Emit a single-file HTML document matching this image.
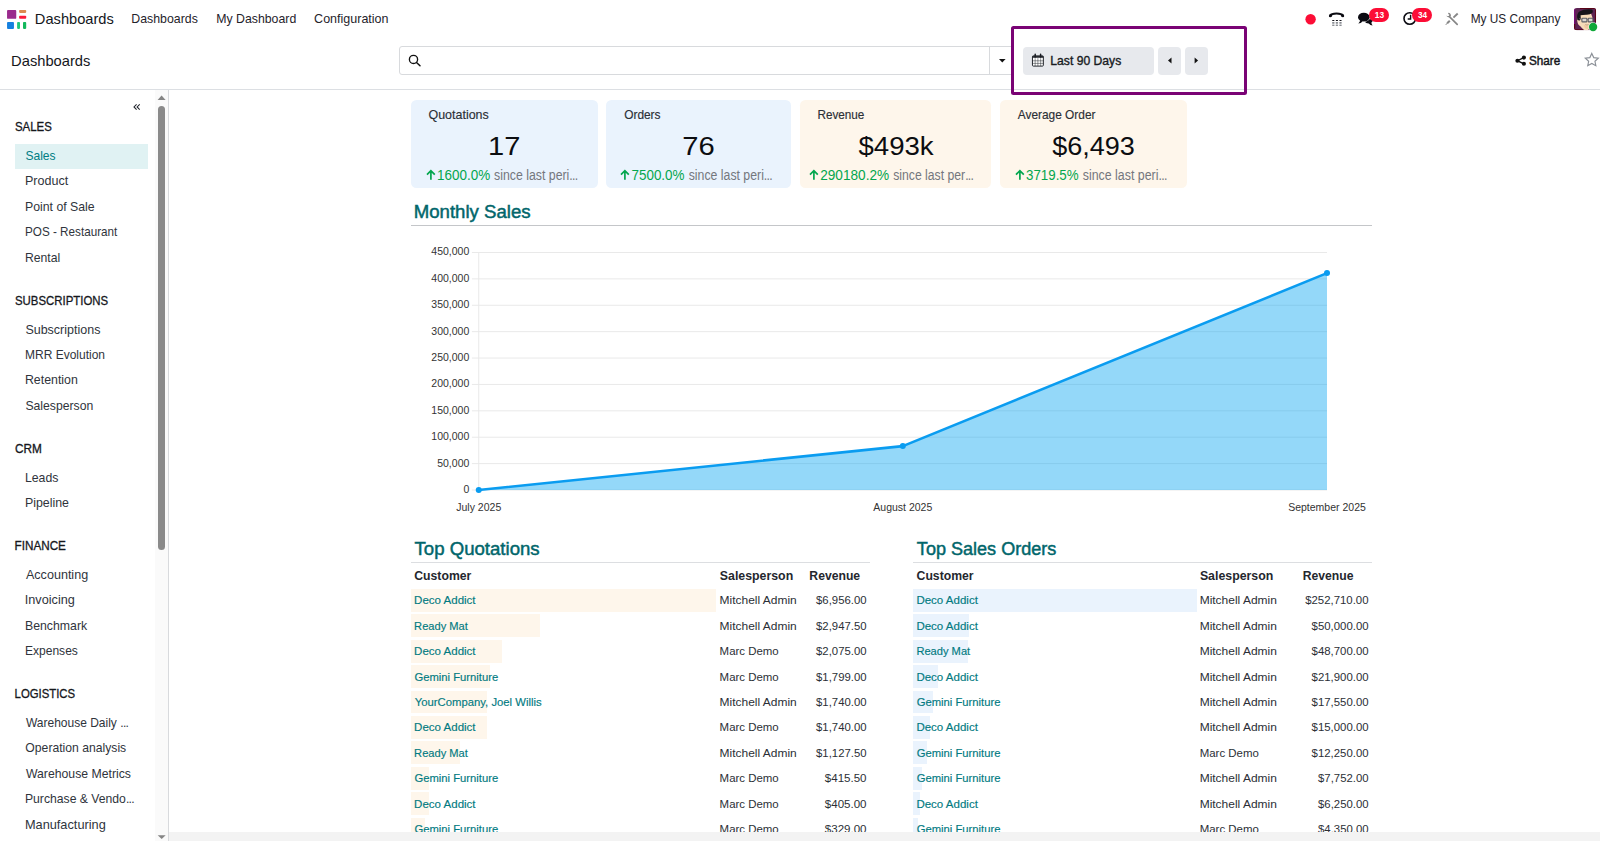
<!DOCTYPE html>
<html lang="en"><head><meta charset="utf-8"><title>Dashboards</title>
<style>
html,body{margin:0;padding:0;background:#fff;}
body{width:1600px;height:841px;overflow:hidden;position:relative;font-family:"Liberation Sans",sans-serif;}
#r{position:absolute;left:0;top:0;width:1600px;height:841px;overflow:hidden;}
#r div,#r svg{position:absolute;}
#r span{position:absolute;white-space:nowrap;line-height:1;transform-origin:0 0;}
</style></head><body><div id="r">
<svg style="left:0;top:0" width="40" height="40" viewBox="0 0 40 40"><rect x="7.05" y="10" width="9.2" height="8.8" rx="0.9" fill="#9a2a8d"/><rect x="19.1" y="10" width="7.1" height="2.9" rx="0.8" fill="#dd8a50"/><rect x="19.1" y="15.8" width="7.1" height="2.9" rx="0.8" fill="#fb1a3c"/><rect x="7.05" y="22.1" width="6.9" height="6.8" rx="0.9" fill="#1680df"/><rect x="17.1" y="22.1" width="2.9" height="6.8" rx="0.8" fill="#22c77c"/><rect x="23" y="22.1" width="3.2" height="6.8" rx="0.8" fill="#12b85c"/></svg>
<div style="left:0px;top:89px;width:1600px;height:1px;background:#dcdfe3;"></div>
<div style="left:399px;top:46px;width:613px;height:27px;border:1px solid #d8dadd;border-radius:3px;background:#fff"></div>
<div style="left:989px;top:47px;width:1px;height:27px;background:#d8dadd;"></div>
<svg style="left:405px;top:51px" width="20" height="20" viewBox="0 0 20 20"><circle cx="8.5" cy="8.4" r="4.1" fill="none" stroke="#111" stroke-width="1.35"/><path d="M11.5 11.5 L15 14.8" stroke="#111" stroke-width="1.5" stroke-linecap="round"/></svg>
<svg style="left:998px;top:57px" width="10" height="8" viewBox="0 0 10 8"><path d="M1 1.9 H7.6 L4.3 5.4 Z" fill="#111"/></svg>
<div style="left:1011.3px;top:26.3px;width:229.6px;height:63.1px;border:3px solid #7a0375;border-radius:2.5px;"></div>
<div style="left:1023px;top:46.5px;width:131px;height:28.4px;background:#e7e9ed;border-radius:4px"></div>
<div style="left:1157.7px;top:46.5px;width:23.3px;height:28.4px;background:#e7e9ed;border-radius:4px"></div>
<div style="left:1184.9px;top:46.5px;width:23.2px;height:28.4px;background:#e7e9ed;border-radius:4px"></div>
<svg style="left:1165px;top:55px" width="10" height="12" viewBox="0 0 10 12"><path d="M6.5 2.4 V8.5 L3.0 5.45 Z" fill="#111"/></svg>
<svg style="left:1191px;top:55px" width="10" height="12" viewBox="0 0 10 12"><path d="M3.6 2.4 V8.5 L7.1 5.45 Z" fill="#111"/></svg>
<div style="left:168px;top:90px;width:1px;height:751px;background:#d8dadd;"></div>
<div style="left:155px;top:90px;width:13px;height:751px;background:#fafafa;"></div>
<div style="left:158px;top:106px;width:7.4px;height:443.5px;background:#8a8a8a;border-radius:3.7px"></div>
<svg style="left:155px;top:92px" width="13" height="10" viewBox="0 0 13 10"><path d="M2.6 8 L6.6 3.6 L10.6 8 Z" fill="#858585"/></svg>
<svg style="left:155px;top:832px" width="13" height="9" viewBox="0 0 13 9"><path d="M2.7 3.2 H10.7 L6.7 7 Z" fill="#858585"/></svg>
<div style="left:15px;top:143.8px;width:133px;height:25.1px;background:#e0f2f3;"></div>
<div style="left:411px;top:100px;width:186.9px;height:88.1px;background:#eaf3fd;border-radius:5.5px"></div>
<svg style="left:425.8px;top:168.5px" width="11" height="12" viewBox="0 0 11 12"><path d="M4.9 10.7 V2.2 M1 5.6 L4.9 1.6 L8.8 5.6" fill="none" stroke="#04a64e" stroke-width="1.7" stroke-linecap="butt" stroke-linejoin="miter"/></svg>
<div style="left:606.25px;top:100px;width:185px;height:88.1px;background:#eaf3fd;border-radius:5.5px"></div>
<svg style="left:620.4px;top:168.5px" width="11" height="12" viewBox="0 0 11 12"><path d="M4.9 10.7 V2.2 M1 5.6 L4.9 1.6 L8.8 5.6" fill="none" stroke="#04a64e" stroke-width="1.7" stroke-linecap="butt" stroke-linejoin="miter"/></svg>
<div style="left:800px;top:100px;width:191px;height:88.1px;background:#fef6eb;border-radius:5.5px"></div>
<svg style="left:808.8px;top:168.5px" width="11" height="12" viewBox="0 0 11 12"><path d="M4.9 10.7 V2.2 M1 5.6 L4.9 1.6 L8.8 5.6" fill="none" stroke="#04a64e" stroke-width="1.7" stroke-linecap="butt" stroke-linejoin="miter"/></svg>
<div style="left:1000px;top:100px;width:186.6px;height:88.1px;background:#fef6eb;border-radius:5.5px"></div>
<svg style="left:1014.8px;top:168.5px" width="11" height="12" viewBox="0 0 11 12"><path d="M4.9 10.7 V2.2 M1 5.6 L4.9 1.6 L8.8 5.6" fill="none" stroke="#04a64e" stroke-width="1.7" stroke-linecap="butt" stroke-linejoin="miter"/></svg>
<div style="left:411px;top:225px;width:961px;height:1px;background:#c4c6c9;"></div>
<svg style="left:400px;top:235px" width="1000" height="290" viewBox="400 235 1000 290"><path d="M471.9 490.00 H1327.00" stroke="#e9e9e9" stroke-width="1"/><path d="M471.9 463.61 H1327.00" stroke="#e9e9e9" stroke-width="1"/><path d="M471.9 437.22 H1327.00" stroke="#e9e9e9" stroke-width="1"/><path d="M471.9 410.83 H1327.00" stroke="#e9e9e9" stroke-width="1"/><path d="M471.9 384.44 H1327.00" stroke="#e9e9e9" stroke-width="1"/><path d="M471.9 358.06 H1327.00" stroke="#e9e9e9" stroke-width="1"/><path d="M471.9 331.67 H1327.00" stroke="#e9e9e9" stroke-width="1"/><path d="M471.9 305.28 H1327.00" stroke="#e9e9e9" stroke-width="1"/><path d="M471.9 278.89 H1327.00" stroke="#e9e9e9" stroke-width="1"/><path d="M471.9 252.50 H1327.00" stroke="#e9e9e9" stroke-width="1"/><path d="M478.75 252.50 V490.00" stroke="#e9e9e9" stroke-width="1"/><path d="M478.75 490.00 L902.80 446.10 L1327.00 273.10 L1327.00 490.00 Z" fill="#00a2f1" fill-opacity="0.42"/><path d="M478.75 490.00 L902.80 446.10 L1327.00 273.10" fill="none" stroke="#0a9cf0" stroke-width="2.6" stroke-linejoin="round" stroke-linecap="round"/><circle cx="478.75" cy="490.00" r="3" fill="#0a9cf0"/><circle cx="902.80" cy="446.10" r="3" fill="#0a9cf0"/><circle cx="1327.00" cy="273.10" r="3" fill="#0a9cf0"/></svg>
<div style="left:411px;top:561.8px;width:459px;height:1.4px;background:#dcdee1;"></div>
<div style="left:411px;top:588.8px;width:305.2px;height:22.9px;background:#fef6eb;"></div>
<div style="left:411px;top:614.23px;width:129.324px;height:22.9px;background:#fef6eb;"></div>
<div style="left:411px;top:639.66px;width:91.0423px;height:22.9px;background:#fef6eb;"></div>
<div style="left:411px;top:665.09px;width:78.9325px;height:22.9px;background:#fef6eb;"></div>
<div style="left:411px;top:690.52px;width:76.3439px;height:22.9px;background:#fef6eb;"></div>
<div style="left:411px;top:715.95px;width:76.3439px;height:22.9px;background:#fef6eb;"></div>
<div style="left:411px;top:741.38px;width:49.47px;height:22.9px;background:#fef6eb;"></div>
<div style="left:411px;top:766.81px;width:18.2304px;height:22.9px;background:#fef6eb;"></div>
<div style="left:411px;top:792.24px;width:17.7697px;height:22.9px;background:#fef6eb;"></div>
<div style="left:411px;top:817.67px;width:14.4351px;height:22.9px;background:#fef6eb;"></div>
<div style="left:913.3px;top:561.8px;width:458.7px;height:1.4px;background:#dcdee1;"></div>
<div style="left:913.3px;top:588.8px;width:283.3px;height:22.9px;background:#eaf3fd;"></div>
<div style="left:913.3px;top:614.23px;width:56.0524px;height:22.9px;background:#eaf3fd;"></div>
<div style="left:913.3px;top:639.66px;width:54.595px;height:22.9px;background:#eaf3fd;"></div>
<div style="left:913.3px;top:665.09px;width:24.5509px;height:22.9px;background:#eaf3fd;"></div>
<div style="left:913.3px;top:690.52px;width:19.6744px;height:22.9px;background:#eaf3fd;"></div>
<div style="left:913.3px;top:715.95px;width:16.8157px;height:22.9px;background:#eaf3fd;"></div>
<div style="left:913.3px;top:741.38px;width:13.7328px;height:22.9px;background:#eaf3fd;"></div>
<div style="left:913.3px;top:766.81px;width:8.69036px;height:22.9px;background:#eaf3fd;"></div>
<div style="left:913.3px;top:792.24px;width:7.00655px;height:22.9px;background:#eaf3fd;"></div>
<div style="left:913.3px;top:817.67px;width:4.87656px;height:22.9px;background:#eaf3fd;"></div>
<svg style="left:1300px;top:8px" width="22" height="22" viewBox="1300 8 22 22"><circle cx="1310.6" cy="19.2" r="5.2" fill="#fc0d36"/></svg>
<svg style="left:1324px;top:8px" width="26" height="22" viewBox="1324 8 26 22"><path d="M1330.2 15.9 C1331.6 12.6 1341.4 12.6 1342.9 15.9" fill="none" stroke="#0b0b12" stroke-width="1.9" stroke-linecap="round"/><path d="M1328.9 15.9 q0.2 -1.9 2.3 -2.3 l1.1 2.2 q-0.3 1.3 -1.9 1.5 q-1.5 0 -1.5 -1.4 Z" fill="#0b0b12"/><path d="M1344.2 15.9 q-0.2 -1.9 -2.3 -2.3 l-1.1 2.2 q0.3 1.3 1.9 1.5 q1.5 0 1.5 -1.4 Z" fill="#0b0b12"/><rect x="1332.10" y="22.1" width="2.4" height="3.9" fill="#dfe0e3"/><rect x="1332.15" y="19.90" width="2.3" height="1.10" rx="0.4" fill="#15151c"/><rect x="1332.15" y="22.15" width="2.3" height="1.30" rx="0.4" fill="#6f7278"/><rect x="1332.15" y="24.80" width="2.3" height="1.20" rx="0.4" fill="#8d9095"/><rect x="1335.70" y="22.1" width="2.4" height="3.9" fill="#dfe0e3"/><rect x="1335.75" y="19.90" width="2.3" height="1.10" rx="0.4" fill="#15151c"/><rect x="1335.75" y="22.15" width="2.3" height="1.30" rx="0.4" fill="#6f7278"/><rect x="1335.75" y="24.80" width="2.3" height="1.20" rx="0.4" fill="#8d9095"/><rect x="1339.30" y="22.1" width="2.4" height="3.9" fill="#dfe0e3"/><rect x="1339.35" y="19.90" width="2.3" height="1.10" rx="0.4" fill="#15151c"/><rect x="1339.35" y="22.15" width="2.3" height="1.30" rx="0.4" fill="#6f7278"/><rect x="1339.35" y="24.80" width="2.3" height="1.20" rx="0.4" fill="#8d9095"/></svg>
<svg style="left:1354px;top:8px" width="24" height="22" viewBox="1354 8 24 22"><path d="M1364.6 21.4 q1.1 1.9 4.1 2.0 q1.6 1.7 3.9 2.2 q-1.2 -1.4 -1.2 -3.0 q1.3 -1.0 1.5 -2.6 l-3 -1 z" fill="#0b0b12"/><ellipse cx="1363.8" cy="17.2" rx="6.2" ry="4.7" fill="#fff"/><ellipse cx="1363.8" cy="17.2" rx="5.8" ry="4.4" fill="#0b0b12"/><path d="M1360.2 20.2 q-0.3 1.9 -1.9 3.2 q2.6 -0.2 4.3 -2.0 z" fill="#0b0b12"/></svg>
<div style="left:1369px;top:7.8px;width:19.9px;height:14px;border-radius:7px;background:#fc0d36"></div>
<svg style="left:1400px;top:8px" width="20" height="22" viewBox="1400 8 20 22"><circle cx="1409.75" cy="18.5" r="5.75" fill="#fff" stroke="#0b0b12" stroke-width="1.6"/><path d="M1410.6 14.7 V19.0 H1407.7" fill="none" stroke="#0b0b12" stroke-width="1.4"/></svg>
<div style="left:1412.3px;top:8px;width:19.7px;height:13.8px;border-radius:6.9px;background:#fc0d36"></div>
<svg style="left:1443px;top:10px" width="18" height="18" viewBox="1443 10 18 18"><path d="M1449.4 16.6 L1457.2 24.3" stroke="#878787" stroke-width="1.7" stroke-linecap="round"/><path d="M1446.3 15.5 q0.6 2.2 3.2 1.7 q1.4 -1.6 -0.2 -3.6 l-0.2 2.2 l-1.6 0.4 z" fill="#878787"/><path d="M1448.2 13.4 q2.4 0.2 2.2 3.0" fill="none" stroke="#878787" stroke-width="1.1"/><path d="M1453.4 17.6 L1457.7 13.5" stroke="#878787" stroke-width="1.9" stroke-linecap="butt"/><path d="M1449.8 20.8 L1447.2 23.2" stroke="#878787" stroke-width="2.1" stroke-linecap="butt"/><path d="M1447.4 23.0 L1446.0 24.6" stroke="#878787" stroke-width="1.0" stroke-linecap="round"/></svg>
<svg style="left:1574px;top:8px" width="26" height="26" viewBox="0 0 26 26"><defs><clipPath id="av"><rect x="0" y="0" width="22.1" height="22.2" rx="3"/></clipPath></defs><g clip-path="url(#av)"><rect x="0" y="0" width="22.1" height="22.2" fill="#5d2452"/><rect x="0" y="0" width="1.2" height="16" fill="#7a0a78"/><rect x="6" y="0" width="16.1" height="1" fill="#5a0418"/><rect x="21" y="0" width="1.1" height="14" fill="#5a0418"/><rect x="0" y="16" width="1.2" height="6.2" fill="#5a0418"/><rect x="0" y="21.2" width="10" height="1" fill="#5a0418"/><path d="M3.2 12.2 q-0.3 -5.5 4 -6.3 l9.8 -0.3 q1.8 3.5 1.8 7.6 l-0.6 3.4 q-2 5.2 -5.4 5.8 q-3.2 0.2 -6.5 -4.2 q-3 -1.4 -3.1 -6 z" fill="#f7dcb9"/><path d="M9.5 16.5 q3.5 2.6 6.8 0.6 l-0.6 2.8 q-2.4 2 -4.8 0.2 z" fill="#f3c9a0"/><path d="M3.3 11.8 q-1.1 -6.1 2.2 -8.3 q4.6 -2.9 12.6 -2.1 q1.3 1.3 0.4 3.3 q-2.6 2.2 -6.2 2 q-3.8 0.2 -5.7 0.6 l0.2 3.3 l-1.4 2.1 z" fill="#17151a"/><rect x="7.9" y="10.2" width="5" height="3.7" rx="0.7" fill="#dcd8d2" stroke="#5e5f65" stroke-width="1.1"/><rect x="14.2" y="10.2" width="4.7" height="3.7" rx="0.7" fill="#dcd8d2" stroke="#5e5f65" stroke-width="1.1"/><path d="M5.2 10.7 L7.9 11.4 M12.9 11.5 H14.2" stroke="#6d6e74" stroke-width="0.9"/><path d="M11.3 16.6 q1.6 0.9 3.3 0.1" fill="none" stroke="#9a6f57" stroke-width="0.6"/></g><circle cx="19.1" cy="19" r="4.7" fill="#fff" fill-opacity="0.85"/><circle cx="19.1" cy="19" r="4.15" fill="#10a83a"/></svg>
<svg style="left:1030px;top:52px" width="16" height="16" viewBox="1030 52 16 16"><rect x="1032.45" y="55.9" width="10.9" height="10.2" rx="0.9" fill="#fff" stroke="#1a1d24" stroke-width="0.95"/><rect x="1032.45" y="55.9" width="10.9" height="1.9" fill="#1a1d24" fill-opacity="0.9"/><path d="M1035.2 54.3 V57 M1040.6 54.3 V57" stroke="#1a1d24" stroke-width="1.5" stroke-linecap="round"/><path d="M1035.15 58.2 V66 M1037.9 58.2 V66 M1040.65 58.2 V66 M1032.5 60.8 H1043.3 M1032.5 63.4 H1043.3" stroke="#1a1d24" stroke-width="0.65" stroke-opacity="0.72"/></svg>
<svg style="left:1513px;top:53px" width="16" height="16" viewBox="1513 53 16 16"><path d="M1523.9 57.6 L1517.4 60.7 L1523.9 63.8" fill="none" stroke="#111" stroke-width="1.35"/><circle cx="1523.9" cy="57.6" r="2.05" fill="#111"/><circle cx="1517.4" cy="60.7" r="2.05" fill="#111"/><circle cx="1523.9" cy="63.8" r="2.05" fill="#111"/></svg>
<svg style="left:1583px;top:50.6px" width="18" height="18" viewBox="0 0 18 18"><path d="M8.8 2.4 L10.75 6.6 L15.3 7.15 L11.95 10.25 L12.85 14.75 L8.8 12.5 L4.75 14.75 L5.65 10.25 L2.3 7.15 L6.85 6.6 Z" fill="none" stroke="#8b9097" stroke-width="1.15" stroke-linejoin="miter"/></svg>
<svg style="left:131px;top:101px" width="12" height="12" viewBox="0 0 12 12"><path d="M5.6 3.3 L3.0 5.95 L5.6 8.6 M8.7 3.3 L6.1 5.95 L8.7 8.6" fill="none" stroke="#20242c" stroke-width="1.05"/></svg>
<span style="left:34px;top:12px;font-size:14.5px;color:#15171c;transform:translateX(0.85px) scaleX(1.0095);">Dashboards</span>
<span style="left:131px;top:13px;font-size:12.25px;color:#1f232b;transform:translateX(0.34px) scaleX(1.0060);">Dashboards</span>
<span style="left:216px;top:13px;font-size:12.25px;color:#1f232b;transform:translateX(0.24px) scaleX(1.0041);">My Dashboard</span>
<span style="left:314px;top:13px;font-size:12.25px;color:#1f232b;transform:translateX(0.11px) scaleX(1.0209);">Configuration</span>
<span style="left:1470px;top:13px;font-size:12.25px;color:#1f232b;transform:translateX(0.68px) scaleX(0.9687);">My US Company</span>
<span style="left:11px;top:54px;font-size:14.5px;color:#15171c;transform:translateX(0.11px) scaleX(1.0134);">Dashboards</span>
<span style="left:1050px;top:55px;font-size:12.25px;color:#181b22;-webkit-text-stroke:0.35px #181b22;transform:translateX(0.33px) scaleX(0.9914);">Last 90 Days</span>
<span style="left:1528px;top:55px;font-size:12.25px;color:#15171c;-webkit-text-stroke:0.45px #15171c;transform:translateX(0.94px) scaleX(0.9572);">Share</span>
<span style="left:14px;top:121px;font-size:12.25px;color:#15171c;-webkit-text-stroke:0.3px #15171c;transform:translateX(0.98px) scaleX(0.9327);">SALES</span>
<span style="left:25px;top:150px;font-size:12.25px;color:#017e84;transform:translateX(0.40px) scaleX(0.9846);">Sales</span>
<span style="left:24px;top:175px;font-size:12.25px;color:#2f343c;transform:translateX(0.92px) scaleX(1.0237);">Product</span>
<span style="left:24px;top:201px;font-size:12.25px;color:#2f343c;transform:translateX(0.94px) scaleX(1.0041);">Point of Sale</span>
<span style="left:24px;top:226px;font-size:12.25px;color:#2f343c;transform:translateX(0.99px) scaleX(0.9551);">POS - Restaurant</span>
<span style="left:24px;top:252px;font-size:12.25px;color:#2f343c;transform:translateX(0.95px) scaleX(0.9971);">Rental</span>
<span style="left:14px;top:295px;font-size:12.25px;color:#15171c;-webkit-text-stroke:0.3px #15171c;transform:translateX(0.98px) scaleX(0.9308);">SUBSCRIPTIONS</span>
<span style="left:25px;top:324px;font-size:12.25px;color:#2f343c;transform:translateX(0.38px) scaleX(1.0200);">Subscriptions</span>
<span style="left:24px;top:349px;font-size:12.25px;color:#2f343c;transform:translateX(0.97px) scaleX(0.9799);">MRR Evolution</span>
<span style="left:24px;top:374px;font-size:12.25px;color:#2f343c;transform:translateX(0.94px) scaleX(1.0088);">Retention</span>
<span style="left:25px;top:400px;font-size:12.25px;color:#2f343c;transform:translateX(0.40px) scaleX(0.9961);">Salesperson</span>
<span style="left:14px;top:443px;font-size:12.25px;color:#15171c;-webkit-text-stroke:0.3px #15171c;transform:translateX(0.90px) scaleX(0.9627);">CRM</span>
<span style="left:24px;top:472px;font-size:12.25px;color:#2f343c;transform:translateX(0.94px) scaleX(1.0018);">Leads</span>
<span style="left:24px;top:497px;font-size:12.25px;color:#2f343c;transform:translateX(0.93px) scaleX(1.0108);">Pipeline</span>
<span style="left:14px;top:540px;font-size:12.25px;color:#15171c;-webkit-text-stroke:0.3px #15171c;transform:translateX(0.54px) scaleX(0.9550);">FINANCE</span>
<span style="left:25px;top:569px;font-size:12.25px;color:#2f343c;transform:translateX(0.93px) scaleX(1.0266);">Accounting</span>
<span style="left:24px;top:594px;font-size:12.25px;color:#2f343c;transform:translateX(0.78px) scaleX(1.0358);">Invoicing</span>
<span style="left:24px;top:620px;font-size:12.25px;color:#2f343c;transform:translateX(0.94px) scaleX(1.0036);">Benchmark</span>
<span style="left:24px;top:645px;font-size:12.25px;color:#2f343c;transform:translateX(0.96px) scaleX(0.9835);">Expenses</span>
<span style="left:14px;top:688px;font-size:12.25px;color:#15171c;-webkit-text-stroke:0.3px #15171c;transform:translateX(0.57px) scaleX(0.9264);">LOGISTICS</span>
<span style="left:25px;top:717px;font-size:12.25px;color:#2f343c;transform:translateX(0.90px) scaleX(0.9800);">Warehouse Daily <i style="font-style:normal;letter-spacing:-0.055em">...</i></span>
<span style="left:25px;top:742px;font-size:12.25px;color:#2f343c;transform:translateX(0.37px) scaleX(0.9936);">Operation analysis</span>
<span style="left:25px;top:768px;font-size:12.25px;color:#2f343c;transform:translateX(0.90px) scaleX(1.0002);">Warehouse Metrics</span>
<span style="left:24px;top:793px;font-size:12.25px;color:#2f343c;transform:translateX(0.95px) scaleX(0.9948);">Purchase &amp; Vendo<i style="font-style:normal;letter-spacing:-0.055em">...</i></span>
<span style="left:24px;top:819px;font-size:12.25px;color:#2f343c;transform:translateX(0.90px) scaleX(1.0416);">Manufacturing</span>
<span style="left:428px;top:109px;font-size:12.25px;color:#2b2f36;-webkit-text-stroke:0.15px #2b2f36;transform:translateX(0.49px) scaleX(1.0167);">Quotations</span>
<span style="left:488px;top:133px;font-size:26.25px;color:#0c0d10;transform:translateX(0.03px) scaleX(1.1088);">17</span>
<span style="left:436px;top:168px;font-size:14px;color:#04a64e;transform:translateX(0.97px) scaleX(0.9615);">1600.0%</span>
<span style="left:494px;top:168px;font-size:14px;color:#74777d;transform:translateX(0.06px) scaleX(0.8796);">since last peri<i style="font-style:normal;letter-spacing:-0.055em">...</i></span>
<span style="left:624px;top:109px;font-size:12.25px;color:#2b2f36;-webkit-text-stroke:0.15px #2b2f36;transform:translateX(0.16px) scaleX(0.9717);">Orders</span>
<span style="left:682px;top:133px;font-size:26.25px;color:#0c0d10;transform:translateX(0.25px) scaleX(1.1122);">76</span>
<span style="left:631px;top:168px;font-size:14px;color:#04a64e;transform:translateX(0.46px) scaleX(0.9600);">7500.0%</span>
<span style="left:688px;top:168px;font-size:14px;color:#74777d;transform:translateX(0.71px) scaleX(0.8780);">since last peri<i style="font-style:normal;letter-spacing:-0.055em">...</i></span>
<span style="left:817px;top:109px;font-size:12.25px;color:#2b2f36;-webkit-text-stroke:0.15px #2b2f36;transform:translateX(0.46px) scaleX(0.9569);">Revenue</span>
<span style="left:858px;top:133px;font-size:26.25px;color:#0c0d10;transform:translateX(0.45px) scaleX(1.0514);">$493k</span>
<span style="left:820px;top:168px;font-size:14px;color:#04a64e;transform:translateX(0.16px) scaleX(0.9736);">290180.2%</span>
<span style="left:893px;top:168px;font-size:14px;color:#74777d;transform:translateX(0.21px) scaleX(0.8722);">since last per<i style="font-style:normal;letter-spacing:-0.055em">...</i></span>
<span style="left:1017px;top:109px;font-size:12.25px;color:#2b2f36;-webkit-text-stroke:0.15px #2b2f36;transform:translateX(0.80px) scaleX(0.9694);">Average Order</span>
<span style="left:1052px;top:133px;font-size:26.25px;color:#0c0d10;transform:translateX(0.21px) scaleX(1.0297);">$6,493</span>
<span style="left:1025px;top:168px;font-size:14px;color:#04a64e;transform:translateX(0.99px) scaleX(0.9521);">3719.5%</span>
<span style="left:1082px;top:168px;font-size:14px;color:#74777d;transform:translateX(0.81px) scaleX(0.8833);">since last peri<i style="font-style:normal;letter-spacing:-0.055em">...</i></span>
<span style="left:413px;top:204px;font-size:17.5px;color:#01666b;-webkit-text-stroke:0.45px #01666b;transform:translateX(0.70px) scaleX(1.0639);">Monthly Sales</span>
<span style="left:463px;top:484px;font-size:10.5px;color:#333;transform:translateX(0.47px) scaleX(1.0000);">0</span>
<span style="left:437px;top:458px;font-size:10.5px;color:#333;transform:translateX(0.19px) scaleX(1.0000);">50,000</span>
<span style="left:431px;top:431px;font-size:10.5px;color:#333;transform:translateX(0.34px) scaleX(1.0000);">100,000</span>
<span style="left:431px;top:405px;font-size:10.5px;color:#333;transform:translateX(0.34px) scaleX(1.0000);">150,000</span>
<span style="left:431px;top:378px;font-size:10.5px;color:#333;transform:translateX(0.34px) scaleX(1.0000);">200,000</span>
<span style="left:431px;top:352px;font-size:10.5px;color:#333;transform:translateX(0.34px) scaleX(1.0000);">250,000</span>
<span style="left:431px;top:326px;font-size:10.5px;color:#333;transform:translateX(0.34px) scaleX(1.0000);">300,000</span>
<span style="left:431px;top:299px;font-size:10.5px;color:#333;transform:translateX(0.34px) scaleX(1.0000);">350,000</span>
<span style="left:431px;top:273px;font-size:10.5px;color:#333;transform:translateX(0.34px) scaleX(1.0000);">400,000</span>
<span style="left:431px;top:246px;font-size:10.5px;color:#333;transform:translateX(0.34px) scaleX(1.0000);">450,000</span>
<span style="left:456px;top:502px;font-size:10.5px;color:#333;transform:translateX(0.27px) scaleX(1.0000);">July 2025</span>
<span style="left:873px;top:502px;font-size:10.5px;color:#333;transform:translateX(0.32px) scaleX(1.0000);">August 2025</span>
<span style="left:1288px;top:502px;font-size:10.5px;color:#333;transform:translateX(0.18px) scaleX(1.0000);">September 2025</span>
<span style="left:414px;top:541px;font-size:17.5px;color:#01666b;-webkit-text-stroke:0.45px #01666b;transform:translateX(0.56px) scaleX(1.0622);">Top Quotations</span>
<span style="left:414px;top:570px;font-size:12.25px;color:#24272e;font-weight:700;transform:translateX(0.25px) scaleX(0.9982);">Customer</span>
<span style="left:719px;top:570px;font-size:12.25px;color:#24272e;font-weight:700;transform:translateX(0.79px) scaleX(1.0077);">Salesperson</span>
<span style="left:809px;top:570px;font-size:12.25px;color:#24272e;font-weight:700;transform:translateX(0.33px) scaleX(0.9952);">Revenue</span>
<span style="left:414px;top:595px;font-size:11.5px;color:#017a81;-webkit-text-stroke:0.15px #017a81;transform:translateX(0.08px) scaleX(1.0017);">Deco Addict</span>
<span style="left:719px;top:595px;font-size:11.5px;color:#2b2f36;transform:translateX(0.57px) scaleX(1.0407);">Mitchell Admin</span>
<span style="left:816px;top:595px;font-size:11.5px;color:#2b2f36;transform:translateX(0.06px) scaleX(0.9866);">$6,956.00</span>
<span style="left:414px;top:621px;font-size:11.5px;color:#017a81;-webkit-text-stroke:0.15px #017a81;transform:translateX(0.11px) scaleX(0.9664);">Ready Mat</span>
<span style="left:719px;top:621px;font-size:11.5px;color:#2b2f36;transform:translateX(0.57px) scaleX(1.0407);">Mitchell Admin</span>
<span style="left:816px;top:621px;font-size:11.5px;color:#2b2f36;transform:translateX(0.06px) scaleX(0.9866);">$2,947.50</span>
<span style="left:414px;top:646px;font-size:11.5px;color:#017a81;-webkit-text-stroke:0.15px #017a81;transform:translateX(0.08px) scaleX(1.0017);">Deco Addict</span>
<span style="left:719px;top:646px;font-size:11.5px;color:#2b2f36;transform:translateX(0.61px) scaleX(0.9946);">Marc Demo</span>
<span style="left:816px;top:646px;font-size:11.5px;color:#2b2f36;transform:translateX(0.06px) scaleX(0.9866);">$2,075.00</span>
<span style="left:414px;top:672px;font-size:11.5px;color:#017a81;-webkit-text-stroke:0.15px #017a81;transform:translateX(0.46px) scaleX(0.9775);">Gemini Furniture</span>
<span style="left:719px;top:672px;font-size:11.5px;color:#2b2f36;transform:translateX(0.61px) scaleX(0.9946);">Marc Demo</span>
<span style="left:816px;top:672px;font-size:11.5px;color:#2b2f36;transform:translateX(0.06px) scaleX(0.9866);">$1,799.00</span>
<span style="left:414px;top:697px;font-size:11.5px;color:#017a81;-webkit-text-stroke:0.15px #017a81;transform:translateX(0.78px) scaleX(0.9822);">YourCompany, Joel Willis</span>
<span style="left:719px;top:697px;font-size:11.5px;color:#2b2f36;transform:translateX(0.57px) scaleX(1.0407);">Mitchell Admin</span>
<span style="left:816px;top:697px;font-size:11.5px;color:#2b2f36;transform:translateX(0.06px) scaleX(0.9866);">$1,740.00</span>
<span style="left:414px;top:722px;font-size:11.5px;color:#017a81;-webkit-text-stroke:0.15px #017a81;transform:translateX(0.08px) scaleX(1.0017);">Deco Addict</span>
<span style="left:719px;top:722px;font-size:11.5px;color:#2b2f36;transform:translateX(0.61px) scaleX(0.9946);">Marc Demo</span>
<span style="left:816px;top:722px;font-size:11.5px;color:#2b2f36;transform:translateX(0.06px) scaleX(0.9866);">$1,740.00</span>
<span style="left:414px;top:748px;font-size:11.5px;color:#017a81;-webkit-text-stroke:0.15px #017a81;transform:translateX(0.11px) scaleX(0.9664);">Ready Mat</span>
<span style="left:719px;top:748px;font-size:11.5px;color:#2b2f36;transform:translateX(0.57px) scaleX(1.0407);">Mitchell Admin</span>
<span style="left:816px;top:748px;font-size:11.5px;color:#2b2f36;transform:translateX(0.06px) scaleX(0.9866);">$1,127.50</span>
<span style="left:414px;top:773px;font-size:11.5px;color:#017a81;-webkit-text-stroke:0.15px #017a81;transform:translateX(0.46px) scaleX(0.9775);">Gemini Furniture</span>
<span style="left:719px;top:773px;font-size:11.5px;color:#2b2f36;transform:translateX(0.61px) scaleX(0.9946);">Marc Demo</span>
<span style="left:824px;top:773px;font-size:11.5px;color:#2b2f36;transform:translateX(0.78px) scaleX(1.0047);">$415.50</span>
<span style="left:414px;top:799px;font-size:11.5px;color:#017a81;-webkit-text-stroke:0.15px #017a81;transform:translateX(0.08px) scaleX(1.0017);">Deco Addict</span>
<span style="left:719px;top:799px;font-size:11.5px;color:#2b2f36;transform:translateX(0.61px) scaleX(0.9946);">Marc Demo</span>
<span style="left:824px;top:799px;font-size:11.5px;color:#2b2f36;transform:translateX(0.78px) scaleX(1.0047);">$405.00</span>
<span style="left:414px;top:824px;font-size:11.5px;color:#017a81;-webkit-text-stroke:0.15px #017a81;transform:translateX(0.46px) scaleX(0.9775);">Gemini Furniture</span>
<span style="left:719px;top:824px;font-size:11.5px;color:#2b2f36;transform:translateX(0.61px) scaleX(0.9946);">Marc Demo</span>
<span style="left:824px;top:824px;font-size:11.5px;color:#2b2f36;transform:translateX(0.78px) scaleX(1.0047);">$329.00</span>
<span style="left:916px;top:541px;font-size:17.5px;color:#01666b;-webkit-text-stroke:0.45px #01666b;transform:translateX(0.87px) scaleX(1.0311);">Top Sales Orders</span>
<span style="left:916px;top:570px;font-size:12.25px;color:#24272e;font-weight:700;transform:translateX(0.55px) scaleX(0.9982);">Customer</span>
<span style="left:1199px;top:570px;font-size:12.25px;color:#24272e;font-weight:700;transform:translateX(0.89px) scaleX(1.0077);">Salesperson</span>
<span style="left:1302px;top:570px;font-size:12.25px;color:#24272e;font-weight:700;transform:translateX(0.63px) scaleX(0.9952);">Revenue</span>
<span style="left:916px;top:595px;font-size:11.5px;color:#017a81;-webkit-text-stroke:0.15px #017a81;transform:translateX(0.38px) scaleX(1.0017);">Deco Addict</span>
<span style="left:1199px;top:595px;font-size:11.5px;color:#2b2f36;transform:translateX(0.67px) scaleX(1.0407);">Mitchell Admin</span>
<span style="left:1305px;top:595px;font-size:11.5px;color:#2b2f36;transform:translateX(0.14px) scaleX(0.9914);">$252,710.00</span>
<span style="left:916px;top:621px;font-size:11.5px;color:#017a81;-webkit-text-stroke:0.15px #017a81;transform:translateX(0.38px) scaleX(1.0017);">Deco Addict</span>
<span style="left:1199px;top:621px;font-size:11.5px;color:#2b2f36;transform:translateX(0.67px) scaleX(1.0407);">Mitchell Admin</span>
<span style="left:1311px;top:621px;font-size:11.5px;color:#2b2f36;transform:translateX(0.60px) scaleX(0.9893);">$50,000.00</span>
<span style="left:916px;top:646px;font-size:11.5px;color:#017a81;-webkit-text-stroke:0.15px #017a81;transform:translateX(0.41px) scaleX(0.9664);">Ready Mat</span>
<span style="left:1199px;top:646px;font-size:11.5px;color:#2b2f36;transform:translateX(0.67px) scaleX(1.0407);">Mitchell Admin</span>
<span style="left:1311px;top:646px;font-size:11.5px;color:#2b2f36;transform:translateX(0.60px) scaleX(0.9893);">$48,700.00</span>
<span style="left:916px;top:672px;font-size:11.5px;color:#017a81;-webkit-text-stroke:0.15px #017a81;transform:translateX(0.38px) scaleX(1.0017);">Deco Addict</span>
<span style="left:1199px;top:672px;font-size:11.5px;color:#2b2f36;transform:translateX(0.67px) scaleX(1.0407);">Mitchell Admin</span>
<span style="left:1311px;top:672px;font-size:11.5px;color:#2b2f36;transform:translateX(0.60px) scaleX(0.9893);">$21,900.00</span>
<span style="left:916px;top:697px;font-size:11.5px;color:#017a81;-webkit-text-stroke:0.15px #017a81;transform:translateX(0.76px) scaleX(0.9775);">Gemini Furniture</span>
<span style="left:1199px;top:697px;font-size:11.5px;color:#2b2f36;transform:translateX(0.67px) scaleX(1.0407);">Mitchell Admin</span>
<span style="left:1311px;top:697px;font-size:11.5px;color:#2b2f36;transform:translateX(0.60px) scaleX(0.9893);">$17,550.00</span>
<span style="left:916px;top:722px;font-size:11.5px;color:#017a81;-webkit-text-stroke:0.15px #017a81;transform:translateX(0.38px) scaleX(1.0017);">Deco Addict</span>
<span style="left:1199px;top:722px;font-size:11.5px;color:#2b2f36;transform:translateX(0.67px) scaleX(1.0407);">Mitchell Admin</span>
<span style="left:1311px;top:722px;font-size:11.5px;color:#2b2f36;transform:translateX(0.60px) scaleX(0.9893);">$15,000.00</span>
<span style="left:916px;top:748px;font-size:11.5px;color:#017a81;-webkit-text-stroke:0.15px #017a81;transform:translateX(0.76px) scaleX(0.9775);">Gemini Furniture</span>
<span style="left:1199px;top:748px;font-size:11.5px;color:#2b2f36;transform:translateX(0.71px) scaleX(0.9946);">Marc Demo</span>
<span style="left:1311px;top:748px;font-size:11.5px;color:#2b2f36;transform:translateX(0.60px) scaleX(0.9893);">$12,250.00</span>
<span style="left:916px;top:773px;font-size:11.5px;color:#017a81;-webkit-text-stroke:0.15px #017a81;transform:translateX(0.76px) scaleX(0.9775);">Gemini Furniture</span>
<span style="left:1199px;top:773px;font-size:11.5px;color:#2b2f36;transform:translateX(0.67px) scaleX(1.0407);">Mitchell Admin</span>
<span style="left:1318px;top:773px;font-size:11.5px;color:#2b2f36;transform:translateX(0.06px) scaleX(0.9866);">$7,752.00</span>
<span style="left:916px;top:799px;font-size:11.5px;color:#017a81;-webkit-text-stroke:0.15px #017a81;transform:translateX(0.38px) scaleX(1.0017);">Deco Addict</span>
<span style="left:1199px;top:799px;font-size:11.5px;color:#2b2f36;transform:translateX(0.67px) scaleX(1.0407);">Mitchell Admin</span>
<span style="left:1318px;top:799px;font-size:11.5px;color:#2b2f36;transform:translateX(0.06px) scaleX(0.9866);">$6,250.00</span>
<span style="left:916px;top:824px;font-size:11.5px;color:#017a81;-webkit-text-stroke:0.15px #017a81;transform:translateX(0.76px) scaleX(0.9775);">Gemini Furniture</span>
<span style="left:1199px;top:824px;font-size:11.5px;color:#2b2f36;transform:translateX(0.71px) scaleX(0.9946);">Marc Demo</span>
<span style="left:1318px;top:824px;font-size:11.5px;color:#2b2f36;transform:translateX(0.06px) scaleX(0.9866);">$4,350.00</span>
<span style="left:1374px;top:10px;font-size:9.4px;color:#fff;font-weight:700;transform:translateX(0.72px) scaleX(0.8942);">13</span>
<span style="left:1417px;top:10px;font-size:9.4px;color:#fff;font-weight:700;transform:translateX(0.96px) scaleX(0.8750);">34</span>
<div style="left:169px;top:832px;width:1431px;height:9px;background:#f3f3f3"></div>
</div></body></html>
